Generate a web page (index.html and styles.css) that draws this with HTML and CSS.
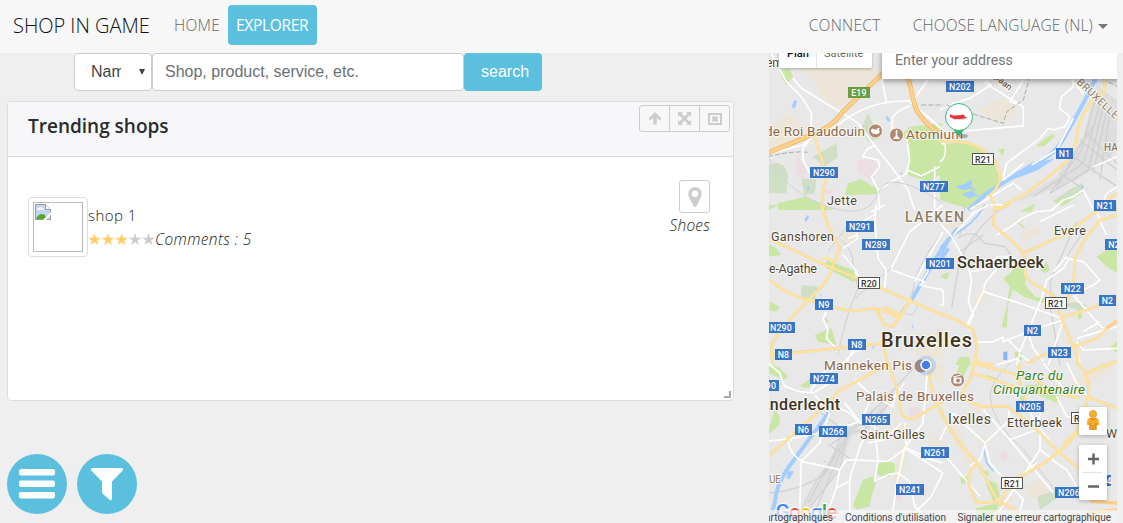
FILE: index.html
```html
<!DOCTYPE html>
<html lang="en">
<head>
<meta charset="utf-8">
<title>Shop in Game</title>
<link rel="stylesheet" href="styles.css">
</head>
<body>
<header class="navbar">
  <a class="brand">SHOP IN GAME</a>
  <nav class="nav-left"><a class="nav-link home">HOME</a><a class="nav-link active">EXPLORER</a></nav>
  <nav class="nav-right"><a class="nav-link connect">CONNECT</a><a class="nav-link language">CHOOSE LANGUAGE (NL)<i class="caret"></i></a></nav>
</header>
<main class="layout">
  <section class="content">
    <form class="search">
      <div class="select"><span class="select-value">Name</span><svg width="6" height="6" viewBox="0 0 6 6"><path d="M0 0h6L3 6z" fill="#444"/></svg></div>
      <div class="query">Shop, product, service, etc.</div>
      <div class="submit">search</div>
    </form>
    <section class="panel">
      <div class="panel-header">
        <h1>Trending shops</h1>
        <div class="tools">
          <span><svg width="14" height="13" viewBox="0 0 14 13"><path d="M7 0L13.500 6.600 11.700 8.500 8.800 5.800V12.500H5.200V5.800L2.300 8.500.5 6.600z" fill="#ccc"/></svg></span>
          <span><svg width="13" height="13" viewBox="0 0 13 13"><path d="M0 0h5L3.500 1.500 6.500 4.400 9.500 1.500 8 0h5v5L11.400 3.500 8.500 6.500 11.400 9.500 13 8v5H8l1.500-1.500-3-2.900-3 2.900L5 13H0V8l1.500 1.500 3-3-3-3L0 5z" fill="#ccc"/></svg></span>
          <span><svg width="14" height="12" viewBox="0 0 14 12"><path d="M1 1h12v10H1z" fill="none" stroke="#ccc" stroke-width="2"/><path d="M4 3.500L6 3.200 7 4 8 3.200 10 3.500 9.500 6 10 8.500 8 8.800 7 8 6 8.800 4 8.500 4.500 6z" fill="#ccc"/></svg></span>
        </div>
      </div>
      <div class="shop">
        <div class="thumb"><div class="picture">
          <svg width="16" height="16" viewBox="0 0 16 16"><path d="M.5.5h10l5 5v10H.5z" fill="#c5d6f5" stroke="#999"/><path d="M10.500 .5v5h5" fill="#fff" stroke="#999"/><path d="M2 6q0-2 2-2 1-2 3 0 2 0 2 2z" fill="#fff"/><path d="M1 15q2-5 6-5 4 0 4 5z" fill="#54a92d"/><path d="M8 16l8-8v3l-5 5z" fill="#fff"/></svg>
        </div></div>
        <div class="shop-info">
          <div class="shop-name">shop 1</div>
          <div class="rating">
            <svg width="67" height="13" viewBox="0 0 67 13"><defs><path id="star" d="M6.500 0L8 4.700H13L9 7.400 10.500 12 6.500 9.200 2.500 12 4 7.400 0 4.700H5z"/></defs><g fill="#ffcc66"><use href="#star"/><use href="#star" x="13.500"/><use href="#star" x="27"/></g><g fill="#ccc"><use href="#star" x="40.500"/><use href="#star" x="54"/></g></svg><em class="comments">Comments : 5</em>
          </div>
        </div>
        <div class="category">
          <div class="pin"><svg width="14" height="20" viewBox="0 0 14 20"><path fill-rule="evenodd" d="M7 0a6.700 6.700 0 0 1 6.700 7c0 2-.7 3-1.400 4.500L8.500 19q-1.500 1.800-3 0L1.700 11.500C1 10 .3 9 .3 7A6.700 6.700 0 0 1 7 0zm0 3.500a3.300 3.300 0 1 0 0 6.600 3.300 3.300 0 0 0 0-6.600z" fill="#ccc"/></svg></div>
          <em>Shoes</em>
        </div>
      </div>
      <svg class="grip" width="7" height="7" viewBox="0 0 7 7"><path d="M5 0h2v7H0V5h5z" fill="#aaa"/></svg>
    </section>
    <div class="actions">
      <div class="round"><svg width="36" height="30" viewBox="0 0 36 30"><g fill="#fff"><rect width="36" height="6.500" rx="2"/><rect y="11.500" width="36" height="6.500" rx="2"/><rect y="23" width="36" height="6.500" rx="2"/></g></svg></div>
      <div class="round"><svg width="32" height="33" viewBox="0 0 32 33"><path d="M1 0h30q2 1 .5 2.700L21 13.500V31q-.5 2-2.200 1L12 26q-1-1-1-2V13.500L.5 2.700Q-1 1 1 0z" fill="#fff"/></svg></div>
    </div>
  </section>
  <aside class="map">
    <svg class="map-canvas" width="348" height="470" viewBox="769 53 348 470">
      <rect x="769" y="53" width="348" height="470" fill="#e8e8e8"/>
      <!-- north-west -->
      <g transform="translate(768 50) scale(.33333)">
        <path class="sand" d="M90 50H345L235 160Q160 190 145 105zM0 230L60 190 130 250 0 300z"/>
        <path class="wood" d="M0 345q50-20 60 30l-5 55H0zM135 320l70-40 5 40-40 30zM100 385l45 5-5 40-30 5zM300 190l35 75-35 10-20-40z"/>
        <path class="park" d="M35 65l30-10 10 25-20 25zM520 220l-95 10-20 20 20 50-5 75 60 20 45-25zM240 400l40-12 50 30v15l-100 2zM30 460l80-20 90 40H30z"/>
        <path class="pink" d="M265 335l40-15 30 30-20 40-45-20zM85 310l30 50-5 30-25-15zM170 418h25v14h-20z"/>
        <path class="water-area" d="M78 150l10 3-7 22-10-3zM352 200l8-2 6 14-6 3zM120 405l5 12-8 5zM398 365l8 8-6 12z"/>
        <path class="white wide" d="M10 10L55 95 100 140 130 188V260M75 85L100 115 240 200 270 220 330 300 370 350 420 420 440 480M0 312L105 285 130 262 210 225Q300 150 420 153M342 90L355 155M480 90L440 145M370 240L375 200Q390 180 425 168M415 250L425 330 415 370 330 420 335 480M330 420L310 380 320 370 335 350 330 330 285 320 295 300 320 285M418 360L460 378 525 345M420 150L525 240M500 350V480"/>
        <path class="rail" d="M0 320Q80 300 125 308M460 165H525"/>
        <path class="thin" d="M0 320Q60 430 180 470T330 430 525 460"/>
        <path class="white wide" d="M130 262L105 295 105 330 130 380"/>
        <path class="orange-edge" d="M0 309L130 255Q190 235 225 185L375 40M415 60L440 165Q455 210 525 260"/>
        <path class="orange" d="M0 309L130 255Q190 235 225 185L375 40M415 60L440 165Q455 210 525 260"/>
        <path class="yellow-edge" d="M140 260L168 350 175 390Q160 420 165 480"/><path class="yellow" d="M140 260L168 350 175 390Q160 420 165 480"/>
      </g>
      <!-- north-east -->
      <g transform="translate(940 50) scale(.33333)">
        <path class="sand" d="M120 180l60-35 60 15-20 40-40 20-60-35z"/>
        <path class="park" d="M0 285Q110 260 160 340 190 390 165 415L90 478 0 450zM290 285l45-33 10 7-30 28-20 3zM175 300l20-5-8 25zM340 455l60-42 30-5-2 20-60 40zM240 485l45-25-10 25z"/>
        <path class="wood" d="M335 455l60-40 35-15-5 30zM500 475l31-20v30h-31z"/>
        <path d="M470 105L430 260 350 380 220 460 410 390 500 330 531 300V150z" fill="#dedede"/>
        <path d="M470 130L425 300 330 430M480 160L430 340 280 440M490 165L445 360 330 430M500 180L460 370M510 190L480 390M465 220L410 300 350 415M440 250L531 340M420 270L531 360M400 320L531 410M360 370L420 410" fill="none" stroke="#d0d0d0" stroke-width="4"/>
        <path class="water" d="M480 60L430 160 380 250Q345 320 275 345L140 430 85 480"/>
        <path class="water-area" d="M220 385l65-45 60-15-50 35-80 30zM45 410l28-8 22-14 0 22 20 15-24-8-20 3zM65 432l30-10 28 20-15-5-20 8zM420 415l10-10 2 10z"/>
        <path class="white wide" d="M0 245Q30 255 50 245L250 228 250 170 200 140 130 95M0 180L40 160 90 145 153 105 140 90M240 165L210 155 250 90M395 60L400 110 365 140 358 175 390 200 375 230 340 240 325 235 300 265 200 340 190 380M395 90L430 130M390 200L375 230M90 478L220 400 245 420M400 205L350 300 275 345M0 335Q20 325 15 285L0 275M335 480L370 450 400 440 430 420 460 480M250 340L190 390M460 350L531 320M480 480L500 430 531 410"/>
        <path class="rail" d="M20 165L60 180 190 220 200 185 250 150 268 85M470 75L531 110"/>
        <path class="yellow-edge" d="M500 55L490 130 450 160Q410 220 410 270L385 330Q330 380 250 435L170 475M0 275Q120 260 175 350 190 405 150 435L170 480M531 430L460 480"/>
        <path class="yellow" d="M500 55L490 130 450 160Q410 220 410 270L385 330Q330 380 250 435L170 475M0 275Q120 260 175 350 190 405 150 435L170 480M531 430L460 480"/>
      </g>
      <!-- west -->
      <g transform="translate(768 205) scale(.33333)">
        <path class="park" d="M0 115l25 15 15 20-40 5zM0 0h35L0 15zM175 165l80 30 20 30-20 5-80-40zM5 290l30 15-10 15-20-5zM140 390l50-20 15 50-55-10zM170 335l12 15-12 8z"/>
        <path class="wood" d="M100 240l50 5-10 38-40-5z"/>
        <path class="sand" d="M220 70l45 10-5 40-35-5zM420 395l105-20v85l-80-10z"/>
        <path class="pink" d="M505 370h20v20h-20z"/>
        <path class="water-area" d="M118 30l5 5-10 18-3-10zM430 360l5 0 3 14zM155 268h5v8zM310 415l10 15-5 1z"/>
        <path class="water" d="M525 125L430 285"/>
        <path class="thin" d="M215 100Q260 140 255 180L270 250Q230 340 210 450M370 190L260 280M180 140L240 60M525 80Q440 180 430 280L390 330M410 325L435 330 450 300"/>
        <path class="white wide" d="M325 0L320 40 330 160 355 195 350 250M320 30L260 60 270 100 225 130M310 20L330 10 350 0M525 0L425 80 370 190M525 80L440 230M370 195L470 230 455 240 525 255M460 230L480 200 475 170M240 100L270 90M225 150Q280 210 275 230M175 320L165 340 180 375 175 400 200 425M220 480L260 440 290 430M270 410L230 480M260 200L275 230 325 245"/>
        <path class="yellow-edge" d="M160 0L180 60 215 130 185 210 170 235 120 285 40 370 10 420 15 480M0 100L160 175 270 220 525 330M0 220L30 245Q75 275 120 285L210 310 250 318 325 310 400 340M325 315L350 360 375 365 430 280M0 450L110 440 345 415 360 480M345 305L400 330"/>
        <path class="yellow" d="M160 0L180 60 215 130 185 210 170 235 120 285 40 370 10 420 15 480M0 100L160 175 270 220 525 330M0 220L30 245Q75 275 120 285L210 310 250 318 325 310 400 340M325 315L350 360 375 365 430 280M0 450L110 440 345 415 360 480M345 305L400 330"/>
        <path class="yellow" d="M160 165q15-15 35 5"/>
      </g>
      <!-- east -->
      <g transform="translate(940 205) scale(.33333)">
        <path class="park" d="M190 220l20-15 20-25 30 20-5 40 30 35 30 5-5 15-60-20-40-30zM300 195l20-25 10 25-15 10zM225 235l-20 60-5 75-15-5 15-60 10-65zM220 40l40 30-15-5-25-25zM410 305l20 30-15 10zM60 455h28l5 25H45zM0 215l15-10 15-3-10 22zM225 440h20v25h-20zM510 425l21-15v35z"/>
        <path class="park" d="M470 155l61-40v90l-30-20z"/>
        <path class="wood" d="M365 300l35-10 40 10-10 20z"/>
        <path class="sand" d="M240 85l30-10 25-15 5 30-50 20zM0 70l40-30 30 10-20 20zM130 250l15 20-30 35-25-5zM365 400l70 20-20 20zM100 0h25v20z"/>
        <path d="M190 440h12v25h-12z" fill="#82b5fa"/>
        <path class="rail-grey" d="M195 0Q80 90 55 190L35 310M55 100Q80 80 110 90L135 115 195 125 215 155M60 140L130 90M75 0L60 90M410 50L330 230 335 300M430 80L380 155M330 300L360 480"/>
        <path class="water" d="M25 130L-10 180"/><path class="water-area" d="M0 125l50-60 4 4-45 75-9 10z"/>
        <path class="water thin-water" d="M40 90Q100 60 135 0"/>
        <path class="white wide" d="M0 55L35 95 85 185 95 225 85 290 100 330 85 360M40 90L100 25 145 0M90 200L155 190 170 155 215 155 215 185M150 0L190 0M130 260L240 295 365 340M200 155L135 235 130 260 80 360M170 90L220 60 245 40 290 20 340 15M300 50L400 0M385 165L370 190 320 225 305 280 260 390 240 440 230 480M380 155L340 200M380 160L430 170 480 225 460 240 430 255 400 275M470 20L485 60 500 90M370 345L290 370 215 400 190 410 190 395 160 410 110 412M370 345L325 480M260 370L280 430 310 470M400 270L430 305 470 350 490 370M430 380L480 350M410 410L430 435 531 430M390 400L420 470M240 440L200 400M235 460L170 480M240 450L270 470 260 480M85 350L90 380M0 250L10 260V300H0M410 400L531 365"/>
        <path class="yellow-edge" d="M165 0L160 60 240 130 255 160 255 210 270 230 340 270 365 340 410 450 415 480M165 15L210 0M250 145L370 90 470 20M370 335L440 315 531 280M531 30L480 45 430 110 405 160 400 250 380 290M340 440L390 430 470 400 531 345M0 325L50 345Q85 365 100 375L110 420 105 470 160 480M260 475L350 430"/>
        <path class="yellow" d="M165 0L160 60 240 130 255 160 255 210 270 230 340 270 365 340 410 450 415 480M165 15L210 0M250 145L370 90 470 20M370 335L440 315 531 280M531 30L480 45 430 110 405 160 400 250 380 290M340 440L390 430 470 400 531 345M0 325L50 345Q85 365 100 375L110 420 105 470 160 480M260 475L350 430"/>
        <path class="orange" d="M500 370L531 348"/>
      </g>
      <!-- south-west -->
      <g transform="translate(768 363) scale(.33333)">
        <path class="park" d="M0 0l35 15 25 25-10 10L0 30zM95 70l40-30v15l-15 20zM0 210l20-70 15 20v25L0 215zM330 305l25-15 25 12 2 25-20 15-38-7zM285 350l30-10 10 15-15 45-5 30-40 10-10-15z"/>
        <path class="sand" d="M470 0h55v60l-30-10zM380 175l40 10v30l-35 15zM395 240l25 10-5 60-25 55-15-10zM480 205l45 40v40l-40-30z"/>
        <path class="pink" d="M425 135l28-5 5 20-35 15zM385 395h15v20h-15z"/>
        <path d="M340 120L290 200 240 190 110 430 125 430 200 340 250 220 330 190 365 110z" fill="#dfdfdf"/>
        <path class="rail-grey" d="M450 0L340 120 260 190 220 210 200 270 120 420M365 120L290 200 240 210 215 320 120 440M330 130L270 190 180 250M215 260L150 345 100 440M235 230L190 330 140 450M0 390Q90 385 170 335L240 210M160 150L250 220M190 250L250 290M220 220L245 180 300 190"/>
        <path class="water" d="M185 145L60 315Q25 365 20 420L5 480"/>
        <path class="water-area" d="M60 325l18 0-13 24-10-3zM300 0l5 0-15 15zM165 293l8 1v5z"/>
        <path class="white wide" d="M0 0L35 30 50 70 90 85 135 90 210 45M140 95L185 150 165 200 155 240 100 295 95 440M130 90L130 80 190 0M180 120L245 150 275 180 320 190 330 290 320 355 360 335 390 330 425 355 440 430 490 480M0 235L80 225 155 210 280 175 310 100M235 290L360 295 415 255 490 290 525 300M235 290L215 320 205 375 245 355 250 330 280 240 310 200M205 375L175 460M245 355L245 440 240 480M60 235Q65 270 100 295L215 320M480 0L465 180 410 255 385 370 370 480M410 60L380 100 375 130 315 100 260 50M230 120L275 175M410 255L525 330 490 400 440 450M410 180L415 250M400 180L350 230 300 240M70 235V210"/>
        <path class="yellow-edge" d="M0 280L80 210 180 120 210 85 360 5M360 0L385 70 400 150Q405 170 440 165L525 115M475 0L500 115 525 150"/>
        <path class="yellow" d="M0 280L80 210 180 120 210 85 360 5M360 0L385 70 400 150Q405 170 440 165L525 115M475 0L500 115 525 150"/>
      </g>
      <!-- south-east -->
      <g transform="translate(940 363) scale(.33333)">
        <path class="park" d="M60 0h30L60 65 40 55zM140 35l30 10-5 12-30-10zM255 65l60 0 45 20-10 35-80-35zM110 435l65-15-10 60h-65zM140 350l30 10 10 40-20 15-20-45zM60 345l20-5 5 15-20 10zM118 330l25-10 5 18zM240 100h12v15h-12z"/>
        <path class="wood" d="M290 400l60-20 10 20-60 40z"/>
        <path class="sand" d="M395 60l40-35 60-30 30 10-35 30-80 45zM255 375l45-30 25 40-45 25zM80 120l55 15-20 20zM0 145l60 60 40 90-15 15zM105 230l30-15 10 40zM185 380l40 30-20 20z"/>
        <path class="pink" d="M175 280l20-15 15 18-20 15z"/>
        <path class="thin" d="M150 100Q155 180 250 260L345 380M150 100Q150 60 210 0"/>
        <path class="water thin-water" d="M130 255L140 300 160 325"/>
        <path class="white wide" d="M0 230L40 150 80 190 135 240 210 170 205 140M130 140L205 225 340 390M210 230L290 200 300 150M300 130V260L350 300 380 320 410 370M135 240L150 300 190 345 250 410 230 470M0 260L60 330 120 400M135 245L120 290 90 310M380 0L410 60 450 110M310 0L380 90M350 100L380 160 410 170M250 120L310 210 350 260M450 150L400 220M240 340L290 300M220 380L180 440 130 480M300 260L260 320"/>
        <path class="yellow-edge" d="M105 0L90 50 60 100 120 130 200 130 270 180 350 260 420 320M0 145L50 230 120 310 160 390 185 430M420 200Q350 290 240 340M185 410L215 360 240 340M95 30L235 75M95 0L210 30 295 55 340 90 420 105M240 0L235 45 260 120M410 0Q450 30 445 100L415 200 370 245M440 30L531 -5M435 100L531 135M110 305Q90 310 85 360L110 420M110 420L180 415 240 450"/>
        <path class="yellow" d="M105 0L90 50 60 100 120 130 200 130 270 180 350 260 420 320M0 145L50 230 120 310 160 390 185 430M420 200Q350 290 240 340M185 410L215 360 240 340M95 30L235 75M95 0L210 30 295 55 340 90 420 105M240 0L235 45 260 120M410 0Q450 30 445 100L415 200 370 245M440 30L531 -5M435 100L531 135M110 305Q90 310 85 360L110 420M110 420L180 415 240 450"/>
        <path class="orange" d="M450 415L531 420M440 450L531 440"/>
      </g>
      <!-- road numbers -->
      <g fill="#3775c6"><rect x="946" y="81" width="28" height="11"/><rect x="810" y="167" width="28" height="11"/><rect x="920" y="181" width="28" height="11"/><rect x="1056" y="148" width="17" height="11"/><rect x="1094" y="200" width="22" height="11"/><rect x="846" y="221" width="28" height="11"/><rect x="862" y="239" width="28" height="11"/><rect x="926" y="258" width="28" height="11"/><rect x="815" y="299" width="18" height="11"/><rect x="767" y="322" width="28" height="11"/><rect x="848" y="339" width="18" height="11"/><rect x="775" y="349" width="17" height="11"/><rect x="1061" y="283" width="23" height="11"/><rect x="1099" y="295" width="17" height="11"/><rect x="1105" y="239" width="12" height="11"/><rect x="1024" y="325" width="17" height="11"/><rect x="1048" y="347" width="23" height="11"/><rect x="810" y="373" width="28" height="11"/><rect x="765" y="380" width="14" height="11"/><rect x="795" y="424" width="17" height="11"/><rect x="819" y="426" width="28" height="11"/><rect x="862" y="414" width="28" height="11"/><rect x="921" y="447" width="28" height="11"/><rect x="896" y="484" width="28" height="11"/><rect x="1016" y="401" width="28" height="11"/><rect x="1055" y="487" width="28" height="11"/><rect x="1094" y="475" width="17" height="11"/></g>
      <rect x="848" y="87" width="22" height="11" fill="#6a9e3f"/>
      <g class="shield"><text x="859" y="96">E19</text><text x="960" y="90">N202</text><text x="824" y="176">N290</text><text x="934" y="190">N277</text><text x="1064.500" y="157">N1</text><text x="1105" y="209">N21</text><text x="860" y="230">N291</text><text x="876" y="248">N289</text><text x="940" y="267">N201</text><text x="824" y="308">N9</text><text x="781" y="331">N290</text><text x="857" y="348">N8</text><text x="783.500" y="358">N8</text><text x="1072.500" y="292">N22</text><text x="1107.500" y="304">N2</text><text x="1114" y="248">N2</text><text x="1032.500" y="334">N2</text><text x="1059.500" y="356">N23</text><text x="824" y="382">N274</text><text x="771" y="389">90</text><text x="803.500" y="433">N6</text><text x="833" y="435">N266</text><text x="876" y="423">N265</text><text x="935" y="456">N261</text><text x="910" y="493">N241</text><text x="1030" y="410">N205</text><text x="1069" y="496">N206</text><text x="1106" y="484">N4</text></g>
      <g fill="#fff" stroke="#555"><rect x="972.500" y="153.500" width="21" height="11"/><rect x="858.500" y="277.500" width="21" height="11"/><rect x="1045.500" y="297.500" width="21" height="11"/><rect x="1001.500" y="477.500" width="21" height="11"/><rect x="1071.500" y="412.500" width="21" height="11"/></g>
      <g class="shield dark"><text x="983" y="162.500">R21</text><text x="869" y="286.500">R20</text><text x="1056" y="306.500">R21</text><text x="1012" y="486.500">R21</text><text x="1082" y="421.500">R21</text></g>
      <!-- places -->
      <g class="place">
        <text x="766" y="67" font-size="12">em</text>
        <text x="827" y="204.500" textLength="30">Jette</text><text x="771" y="241" textLength="63">Ganshoren</text><text x="769" y="273" textLength="48">e-Agathe</text><text x="1054" y="235" textLength="32">Evere</text><text x="860" y="438.500" textLength="65">Saint-Gilles</text><text x="1007" y="427" textLength="55">Etterbeek</text><text x="948" y="424" textLength="43" font-size="14">Ixelles</text><text x="1106" y="438">W</text>
        <g fill="#40351f"><text x="881" y="347" textLength="91" font-size="20" font-weight="500">Bruxelles</text><text x="957" y="268" textLength="87" font-size="16.500" font-weight="500">Schaerbeek</text><text x="759" y="410" textLength="81" font-size="16" font-weight="500">Anderlecht</text></g>
        <g fill="#907b5d"><text x="905" y="222" textLength="59" font-size="14" font-weight="500">LAEKEN</text><text x="1104" y="151" font-size="10" font-weight="500">HAREN</text><text x="762" y="483" font-size="10">OUE</text><text transform="translate(1076 83) rotate(43)" font-size="10.500" textLength="60">BRUXELLES</text></g>
        <text transform="translate(994 78) rotate(40)" font-size="9">paan</text>
        <g fill="#8d6547"><text x="765" y="136" textLength="100" font-size="13.500">de Roi Baudouin</text><text x="906" y="139" textLength="57" font-size="13.500">Atomium</text><text x="824" y="370" textLength="88" font-size="13.500">Manneken Pis</text><text x="856" y="401" textLength="118" font-size="13.500">Palais de Bruxelles</text></g>
        <g fill="#378317" font-style="italic" font-size="13.500"><text x="1016" y="380" textLength="47">Parc du</text><text x="993" y="394" textLength="92">Cinquantenaire</text></g>
      </g>
      <g fill="#b08970" stroke="#fff" stroke-width=".8"><circle cx="875.500" cy="131" r="7"/><circle cx="896.500" cy="135" r="7"/><circle cx="957.500" cy="380" r="7"/><circle cx="921" cy="366" r="7"/></g>
      <path d="M871 130q1-2 3-1l2 1q2-3 4-2-2 1 0 4-2 3-5 2-4 0-4-4zM895.700 130h1.600v6l3 3h-7.600l3-3z" fill="#fff"/>
      <rect x="953.500" y="377.500" width="8" height="6" rx="1" fill="#fff"/><circle cx="958" cy="380.500" r="2" fill="#b08970"/><path d="M953 377l8-2" stroke="#fff"/>
      <circle cx="926" cy="365.500" r="10" fill="#4285f4" opacity=".22"/><circle cx="926" cy="365" r="5" fill="#427fed" stroke="#fff" stroke-width="1.500"/>
      <!-- shop marker -->
      <ellipse cx="963" cy="136" rx="5" ry="2" fill="#555" opacity=".4"/>
      <path d="M953.500 130L959 136l5.500-6.500z" fill="#2bb673"/><circle cx="959" cy="117" r="13.500" fill="#fff" stroke="#38bb83"/>
      <path d="M955 117.500h13l-3 2h-12z" fill="#bbb"/><path d="M950 114l3 1.500 9-.5 1-1 2 2.500 2 1-6 1.500h-7l-4-2z" fill="#e7353c"/>
      <!-- attribution -->
      <text class="logo" x="775.500" y="519" textLength="62"><tspan fill="#4285f4">G</tspan><tspan fill="#ea4335">o</tspan><tspan fill="#fbbc05">o</tspan><tspan fill="#4285f4">g</tspan><tspan fill="#34a853">l</tspan><tspan fill="#ea4335">e</tspan></text>
      <rect x="769" y="510" width="348" height="13" fill="#f5f5f5" opacity=".72"/>
      <g class="terms"><text x="765" y="520.500" textLength="68">artographiques</text><text x="845" y="520.500" textLength="101">Conditions d'utilisation</text><text x="957.500" y="520.500" textLength="153.500">Signaler une erreur cartographique</text></g>
    </svg>
    <div class="map-types"><b>Plan</b><span>Satellite</span></div>
    <div class="address">Enter your address</div>
    <div class="map-controls">
      <div class="pegman"><svg width="14" height="22" viewBox="0 0 14 22"><circle cx="7" cy="4" r="3.600" fill="#f5b02e" stroke="#d78a16" stroke-width=".7"/><path d="M3 8h8q2 1 2 4v3h-2.500L10 20H4l-.5-5H1v-3q0-3 2-4z" fill="#f5ad2c"/><path d="M4 8l3 2 3-2M4 13v7M10 13v7M7 15v5" fill="none" stroke="#cc7c12"/></svg></div>
      <div class="zoom"><svg width="28" height="55" viewBox="0 0 28 55"><path d="M9 14H20M14.500 8.500V19.500M9 41.500H20" stroke="#666" stroke-width="2.500"/><path d="M4 27.500H23" stroke="#e2e2e2"/></svg></div>
    </div>
  </aside>
</main>
</body>
</html>
```
FILE: styles.css
```css
* { box-sizing: border-box; }
body { margin: 0; width: 1123px; height: 523px; overflow: hidden; background: #efefef; color: #373a3c; font: 300 15px/24px "Open Sans", sans-serif; }
.navbar { height: 53px; display: flex; align-items: flex-start; background: #f7f7f7; padding: 5px 15px 0 13px; }
.brand { width: 153px; font-size: 20px; line-height: 41px; color: #111; white-space: nowrap; letter-spacing: -.02px; }
.nav-left, .nav-right { display: flex; }
.nav-link { height: 40px; line-height: 40px; padding: 0 8px; color: #666; white-space: nowrap; font-size: 15.5px; }
.home { width: 62px; letter-spacing: .3px; }
.active { width: 89px; border-radius: 4px; background: #5bc0de; color: #fff; font-weight: 400; letter-spacing: -.3px; }
.nav-right { margin-left: auto; }
.connect { width: 104px; letter-spacing: .27px; }
.language { display: flex; align-items: center; padding-right: 0; letter-spacing: .17px; }
.caret { margin: 3px 0 0 5px; border: 5px solid transparent; border-top-color: #777; border-bottom: 0; }
.layout { display: flex; height: 470px; }
.content { width: 769px; padding-left: 7px; }
.search { display: flex; height: 38px; padding-left: 67px; font: 16px/36px "Liberation Sans", sans-serif; }
.select, .query { border: 1px solid #ccc; border-radius: 4px; background: #fff; }
.select { width: 78px; display: flex; align-items: center; justify-content: space-between; padding: 0 6px 0 16px; color: #444; }
.select-value { width: 30px; overflow: hidden; }
.query { width: 312px; padding-left: 12px; color: #686f76; }
.submit { width: 78px; border-radius: 4px; padding: 1px 0 0 17px; background: #5bc0de; color: #fff; }
.panel { position: relative; width: 727px; height: 300px; margin-top: 10px; border: 1px solid #ddd; border-radius: 4px; background: #fff; }
.panel-header { display: flex; justify-content: space-between; height: 55px; padding: 3px 3px 0 20px; border-bottom: 1px solid #d8d8dc; border-radius: 3px 3px 0 0; background: #f7f7f9; }
h1 { margin: 8px 0 0; font: 600 19px/26px "Open Sans", sans-serif; color: #292b2c; white-space: nowrap; }
.tools { display: flex; width: 91px; height: 27px; border: 1px solid #ccc; border-radius: 3px; }
.tools span { flex: 1; display: grid; place-items: center; }
.tools span + span { border-left: 1px solid #ccc; }
.shop { display: flex; padding: 23px 23px 0 20px; }
.thumb { width: 60px; height: 60px; margin-top: 17px; padding: 4px; border: 1px solid #ddd; border-radius: 4px; }
.picture { width: 50px; height: 50px; border: 1px solid #bbb; padding: 1px; }
.picture svg { display: block; }
.shop-info { padding-top: 23px; }
.shop-name { letter-spacing: .45px; color: #222; }
.rating { display: flex; align-items: center; }
em { white-space: nowrap; letter-spacing: .2px; font-weight: 300; color: #222; }
.comments { font-size: 15.5px; letter-spacing: .35px; }
.category { margin-left: auto; display: flex; flex-direction: column; align-items: flex-end; }
.category em { font-size: 15.5px; }
.pin { width: 31px; height: 33px; display: grid; place-items: center; border: 1px solid #ccc; border-radius: 3px; }
.grip { position: absolute; right: 2px; bottom: 2px; }
.actions { display: flex; gap: 10px; margin-top: 53px; }
.round { width: 60px; height: 60px; display: grid; place-items: center; border-radius: 50%; background: #5bc0de; }
.map { position: relative; width: 348px; height: 470px; overflow: hidden; font-family: Roboto, sans-serif; font-weight: 400; }
.map-canvas { display: block; }
.map-types { position: absolute; left: 10px; top: -14px; width: 93px; height: 29px; display: flex; font-size: 11px; line-height: 29px; background: #fff; border-radius: 2px; box-shadow: 0 1px 3px #0004; color: #666; }
.map-types b { width: 38px; padding-left: 8px; color: #111; font-weight: 500; border-right: 1px solid #e5e5e5; }
.map-types span { padding-left: 7px; }
.address { position: absolute; left: 113px; top: -13px; width: 250px; height: 39px; padding-left: 13px; background: #fff; color: #777; font-size: 14.2px; line-height: 40px; box-shadow: 0 2px 6px #0006; }
.map-controls { position: absolute; left: 310px; top: 354px; display: grid; gap: 10px; }
.map-controls div { width: 28px; border-radius: 2px; background: #fff; box-shadow: 0 1px 4px #0004; }
.pegman { height: 28px; display: grid; place-items: center; }
.map-controls .pegman { display: grid; }
.zoom { height: 55px; }
.zoom svg { display: block; }
.sand { fill: #ece5d8; }
.wood { fill: #cfdfc5; }
.park { fill: #cae6a4; }
.pink { fill: #eedde2; }
.water-area { fill: #a3ccff; }
.water { fill: none; stroke: #a3ccff; stroke-width: 12; }
.thin-water { stroke-width: 5; }
.white { fill: none; stroke: #fff; stroke-width: 5; stroke-linejoin: round; }
.rail { fill: none; stroke: #aaa; stroke-width: 3; stroke-dasharray: 15 6; }
.thin { fill: none; stroke: #d0d0d0; stroke-width: 3; }
.rail-grey { fill: none; stroke: #d2d2d2; stroke-width: 4; }
.orange-edge, .orange, .yellow-edge, .yellow { fill: none; stroke-linejoin: round; }
.orange-edge { stroke: #eeb25e; stroke-width: 14; }
.orange { stroke: #ffd08a; stroke-width: 10; }
.yellow-edge { stroke: #efd594; stroke-width: 8; }
.yellow { stroke: #ffe49f; stroke-width: 6; }
.shield { fill: #fff; font: 500 8.8px Roboto, sans-serif; text-anchor: middle; letter-spacing: .2px; }
.dark { fill: #333; }
.place { fill: #51462f; font-family: Roboto, sans-serif; font-size: 12.5px; }
.place text { stroke: #fff; stroke-width: 2px; stroke-opacity: .75; paint-order: stroke; stroke-linejoin: round; }
.logo { font: 500 21px Roboto, sans-serif; paint-order: stroke; stroke: #fff; stroke-width: 2px; }
.terms { fill: #444; font: 10px Roboto, sans-serif; }
```
